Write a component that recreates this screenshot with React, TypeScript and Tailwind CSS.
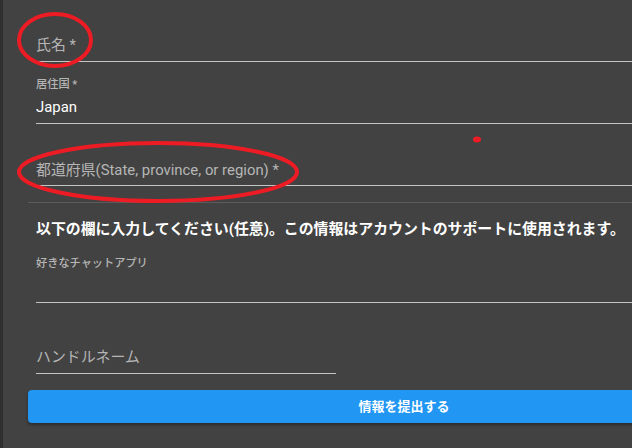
import React from "react";

const font = "font-['Roboto','Noto_Sans_CJK_JP',sans-serif]";

function Annotations() {
	return (
		<svg className="absolute inset-0 pointer-events-none" width={632} height={448} viewBox="0 0 632 448">
			<ellipse cx={55} cy={40} rx={36} ry={26} fill="none" stroke="#ed1c24" strokeWidth={4} />
			<ellipse cx={158} cy={172} rx={139} ry={29} fill="none" stroke="#ed1c24" strokeWidth={4} />
			<ellipse cx={477} cy={139.5} rx={4} ry={3} fill="#ed1c24" />
		</svg>
	);
}

export default function App() {
	return (
		<div className={`relative w-[632px] h-[448px] overflow-hidden flex bg-[#424242] ${font}`}>
			<div className="w-[3px] shrink-0 bg-[#2f2f2f]" />
			<div className="w-[777px] shrink-0 pl-[25px]">
				<div className="flex flex-col">
					{/* 氏名 */}
					<div className="px-2 pt-[36px]">
						<div className="border-b border-[#c4c4c4] pb-[6px]">
							<div className="text-[14.9px] leading-[19px] text-[#b6b6b6]">氏名 *</div>
						</div>
					</div>

					{/* 居住国 */}
					<div className="px-2 mt-[16px]">
						<div className="border-b border-[#c4c4c4] pb-[6px]">
							<div className="text-[11.2px] leading-[14px] font-medium text-[#b6b6b6]">居住国 *</div>
							<div className="mt-[6px] text-[14.9px] leading-[19px] text-white">Japan</div>
						</div>
					</div>

					{/* 都道府県 */}
					<div className="px-2 mt-[37px]">
						<div className="border-b border-[#c4c4c4] pb-[5px]">
							<div className="text-[14.9px] leading-[19px] text-[#b6b6b6]">都道府県(State, province, or region) *</div>
						</div>
					</div>

					<div className="mt-[16px] h-px bg-[#5b5b5b]" />

					<div className="px-2 mt-[16px] text-[14.9px] leading-[20px] font-bold text-white whitespace-nowrap">
						以下の欄に入力してください(任意)。この情報はアカウントのサポートに使用されます。
					</div>

					{/* 好きなチャットアプリ */}
					<div className="px-2 mt-[18px]">
						<div className="border-b border-[#c4c4c4] h-[46px]">
							<div className="text-[11.2px] leading-[14px] font-medium text-[#b6b6b6]">好きなチャットアプリ</div>
						</div>
					</div>

					{/* ハンドルネーム */}
					<div className="px-2 mt-[45px]">
						<div className="w-[300px] border-b border-[#c4c4c4] pb-[6px]">
							<div className="text-[14.9px] leading-[19px] text-[#b6b6b6]">ハンドルネーム</div>
						</div>
					</div>

					<button
						type="button"
						className="mt-[16px] h-[33px] w-full rounded-[4px] bg-[#2196f3] text-white text-[13px] font-bold shadow-[0_2px_3px_rgba(0,0,0,0.35)]"
					>
						情報を提出する
					</button>
				</div>
			</div>
			<Annotations />
		</div>
	);
}
